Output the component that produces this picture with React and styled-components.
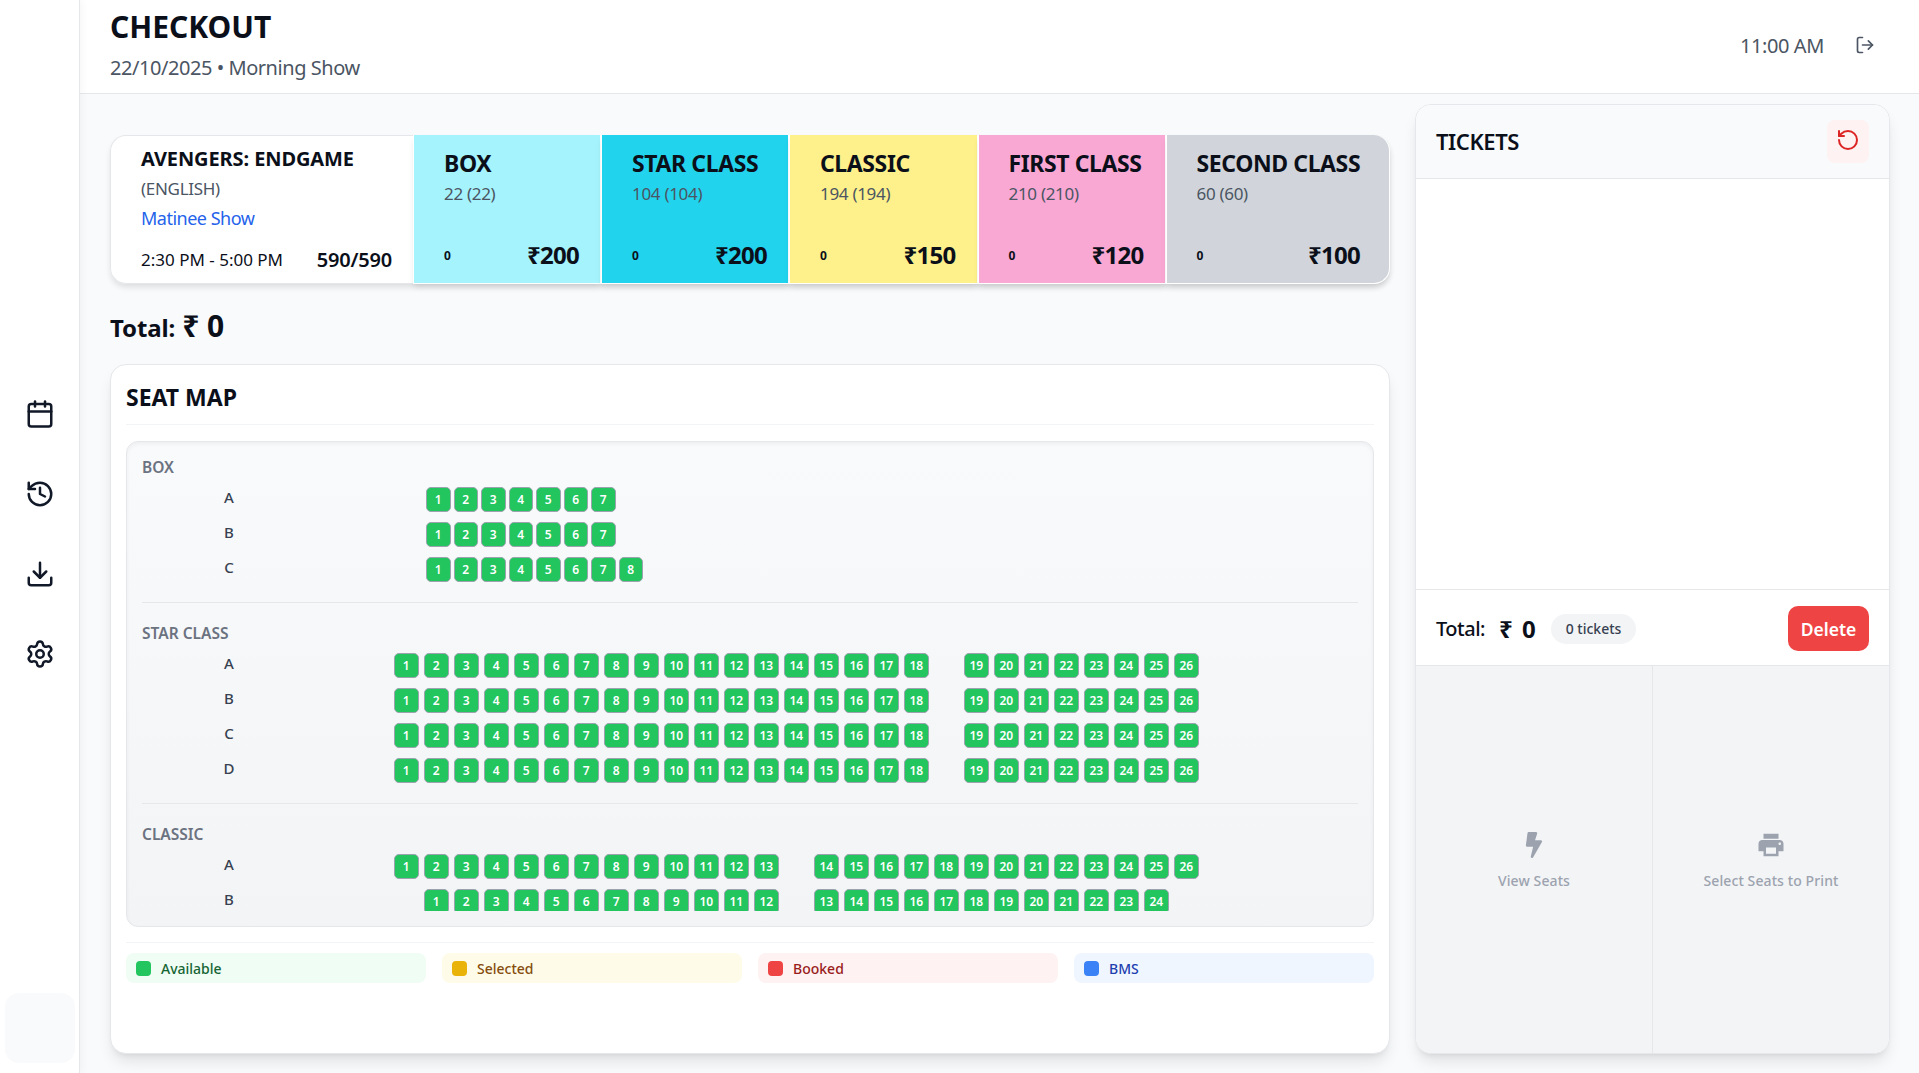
import React from "react";
import styled, { createGlobalStyle } from "styled-components";
import { Calendar, History, Download, Settings, LogOut, RotateCcw } from "lucide-react";
import { FaBolt } from "react-icons/fa";
import { MdPrint } from "react-icons/md";

const GlobalStyle = createGlobalStyle`
  html, body { margin: 0; padding: 0; height: 100%; overflow: hidden; }
  body { font-family: "Noto Sans", "Open Sans", sans-serif; color: #0b0f19; background: #f9fafb; }
  * { box-sizing: border-box; }
`;

const Page = styled.div`
  display: flex;
  height: 100vh;
  overflow: hidden;
`;

const Sidebar = styled.aside`
  width: 80px;
  flex: none;
  position: relative;
  z-index: 1;
  background: #fff;
  border-right: 1px solid #e5e7eb;
  box-shadow: 2px 0 8px rgba(0, 0, 0, 0.04);
  display: flex;
  flex-direction: column;
  align-items: center;
  padding: 374px 0 10px;
`;

const SideItem = styled.div`
  height: 80px;
  display: flex;
  align-items: center;
  justify-content: center;
  color: #111827;
`;

const SideFoot = styled.div`
  margin-top: auto;
  width: 70px;
  height: 70px;
  border-radius: 14px;
  background: #f9fafb;
`;

const Body = styled.div`
  flex: 1;
  min-width: 0;
  display: flex;
  flex-direction: column;
`;

const Header = styled.header`
  height: 94px;
  flex: none;
  background: #fff;
  border-bottom: 1px solid #e5e7eb;
  padding: 8px 30px 12px;
  display: flex;
  justify-content: space-between;
  align-items: center;
`;

const Title = styled.h1`
  margin: 0;
  font-size: 30px;
  line-height: 40px;
  font-weight: 700;
`;

const Subtitle = styled.div`
  margin-top: 7px;
  font-size: 20px;
  line-height: 28px;
  letter-spacing: -0.45px;
  color: #4b5563;
`;

const Clock = styled.div`
  display: flex;
  align-items: center;
  gap: 31px;
  font-size: 20px;
  letter-spacing: -0.4px;
  color: #4b5563;
  padding: 1px 14px 0 0;
`;

const Main = styled.main`
  flex: 1;
  min-height: 0;
  display: flex;
  gap: 25px;
  padding: 10px 29px 19px 30px;
`;

const LeftColumn = styled.div`
  flex: 1;
  min-width: 0;
  display: flex;
  flex-direction: column;
  padding-top: 31px;
`;

const ShowRow = styled.div`
  display: grid;
  grid-template-columns: 303px 188px 188px 188.5px 188px minmax(0, 1fr);
  height: 149px;
  border-radius: 16px;
  box-shadow: 0 4px 6px -1px rgba(0, 0, 0, 0.12);
`;

const MovieCard = styled.div`
  background: #fff;
  border: 1px solid #e5e7eb;
  border-right: none;
  border-radius: 16px 0 0 16px;
  padding: 9px 21px 0 30px;
  display: flex;
  flex-direction: column;
`;

const MovieName = styled.div`
  font-size: 20px;
  line-height: 28px;
  letter-spacing: -0.1px;
  font-weight: 700;
`;

const MovieLang = styled.div`
  font-size: 17px;
  line-height: 31px;
  letter-spacing: -0.3px;
  color: #4b5563;
`;

const MovieShow = styled.div`
  font-size: 18px;
  line-height: 29px;
  letter-spacing: -0.5px;
  color: #2563eb;
`;

const MovieFoot = styled.div`
  margin-top: auto;
  margin-bottom: 9px;
  display: flex;
  justify-content: space-between;
  align-items: center;
  font-size: 17px;
  line-height: 28px;
`;

const SeatCount = styled.span`
  font-size: 20px;
  letter-spacing: -0.2px;
  font-weight: 600;
`;

const ClassCell = styled.div`
  min-width: 0;
  background: ${(p) => p.$bg};
  border: 1px solid #fff;
  border-width: 0 1px 1px 1px;
  padding: 12px 21px 0 30px;
  display: flex;
  flex-direction: column;
  box-shadow: 0 4px 6px -1px rgba(0, 0, 0, 0.1);

  &:last-child {
    border-radius: 0 16px 16px 0;
    padding-right: 29px;
  }
`;

const ClassName = styled.div`
  font-size: 23px;
  line-height: 32px;
  font-weight: 700;
  white-space: nowrap;
  letter-spacing: -0.4px;
`;

const ClassSeats = styled.div`
  margin-top: 1px;
  font-size: 17px;
  line-height: 28px;
  letter-spacing: -0.3px;
  color: #4b5563;
`;

const ClassFoot = styled.div`
  margin-top: auto;
  margin-bottom: 12px;
  display: flex;
  justify-content: space-between;
  align-items: center;
`;

const ClassQty = styled.span`
  font-size: 12px;
  font-weight: 700;
`;

const ClassPrice = styled.span`
  font-size: 24px;
  line-height: 32px;
  letter-spacing: -0.7px;
  font-weight: 700;
`;

const TotalLine = styled.div`
  display: flex;
  align-items: baseline;
  gap: 7px;
  height: 80px;
  padding-top: 21px;
  font-size: 24px;
  font-weight: 700;
  letter-spacing: -0.1px;
`;

const TotalAmount = styled.span`
  font-size: 30px;
`;

const MapCard = styled.section`
  flex: 1;
  min-height: 0;
  background: #fff;
  border: 1px solid #e5e7eb;
  border-radius: 16px;
  box-shadow: 0 10px 15px -3px rgba(0, 0, 0, 0.1), 0 4px 6px -4px rgba(0, 0, 0, 0.1);
  padding: 16px 15px 0;
  display: flex;
  flex-direction: column;
`;

const MapTitle = styled.h2`
  margin: 0 0 16px;
  height: 44px;
  border-bottom: 1px solid #f3f4f6;
  font-size: 23px;
  line-height: 32px;
  font-weight: 700;
`;

const MapPanel = styled.div`
  height: 486px;
  flex: none;
  background: linear-gradient(#f9fafb, #f3f4f6);
  border: 1px solid #e5e7eb;
  border-radius: 12px;
  box-shadow: inset 0 2px 4px rgba(0, 0, 0, 0.05);
  padding: 15px;
`;

const MapScroll = styled.div`
  height: 100%;
  overflow: hidden;
`;

const ClassBlock = styled.div`
  padding-bottom: 20px;
  margin-bottom: 20px;
  border-bottom: 1px solid #e5e7eb;

  &:last-child {
    border-bottom: none;
    margin-bottom: 0;
  }
`;

const ClassHeading = styled.div`
  font-size: 15.5px;
  line-height: 20px;
  font-weight: 600;
  color: #6b7280;
  margin-bottom: 10px;
`;

const SeatRow = styled.div`
  display: grid;
  grid-template-columns: 174px 1fr;
  height: 25px;
  margin-bottom: 10px;

  &:last-child {
    margin-bottom: 0;
  }
`;

const RowLabel = styled.div`
  text-align: center;
  font-size: 15px;
  line-height: 20px;
  font-weight: 500;
  color: #374151;
`;

const Seats = styled.div`
  display: flex;
  gap: ${(p) => p.$gap}px;
  padding-left: ${(p) => p.$indent}px;
`;

const Seat = styled.div`
  width: 24.5px;
  height: 25px;
  flex: none;
  background: #22c55e;
  border: 1px solid #9ca3af;
  border-radius: 5px;
  color: #fff;
  font-size: 12px;
  font-weight: 600;
  display: flex;
  align-items: center;
  justify-content: center;
`;

const Aisle = styled.div`
  width: 24.5px;
  flex: none;
`;

const Legend = styled.div`
  margin-top: 15px;
  border-top: 1px solid #f3f4f6;
  padding-top: 10px;
  display: grid;
  grid-template-columns: repeat(4, 1fr);
  gap: 16px;
`;

const LegendItem = styled.div`
  height: 30px;
  border-radius: 8px;
  background: ${(p) => p.$bg};
  color: ${(p) => p.$fg};
  display: flex;
  align-items: center;
  gap: 10px;
  padding-left: 10px;
  font-size: 14px;
  font-weight: 500;
`;

const LegendDot = styled.span`
  width: 15px;
  height: 15px;
  border-radius: 4px;
  background: ${(p) => p.$color};
`;

const TicketPanel = styled.section`
  width: 475px;
  flex: none;
  background: #fff;
  border: 1px solid #e5e7eb;
  border-radius: 16px;
  box-shadow: 0 10px 15px -3px rgba(0, 0, 0, 0.1), 0 4px 6px -4px rgba(0, 0, 0, 0.1);
  display: flex;
  flex-direction: column;
  overflow: hidden;
`;

const TicketHead = styled.div`
  height: 74px;
  flex: none;
  background: #f9fafb;
  border-bottom: 1px solid #e5e7eb;
  padding: 0 20px;
  display: flex;
  align-items: center;
  justify-content: space-between;
`;

const TicketTitle = styled.div`
  font-size: 22px;
  font-weight: 600;
  letter-spacing: -0.4px;
  padding-bottom: 2px;
`;

const ResetButton = styled.div`
  width: 42px;
  height: 43px;
  border-radius: 8px;
  background: #fef2f2;
  color: #dc2626;
  display: flex;
  align-items: center;
  justify-content: center;
  padding-bottom: 4px;
`;

const TicketList = styled.div`
  flex: 1;
  min-height: 0;
`;

const TicketTotal = styled.div`
  height: 77px;
  flex: none;
  border-top: 1px solid #e5e7eb;
  border-bottom: 1px solid #e5e7eb;
  padding: 2px 20px 0;
  display: flex;
  align-items: center;
`;

const TotalLabel = styled.span`
  font-size: 20px;
  font-weight: 500;
  letter-spacing: -0.5px;
`;

const TotalValue = styled.span`
  margin-left: 14px;
  font-size: 24px;
  font-weight: 700;
  word-spacing: 3px;
`;

const TicketBadge = styled.span`
  margin-left: 15px;
  height: 30px;
  padding: 0 15px;
  border-radius: 15px;
  background: #f3f4f6;
  color: #374151;
  font-size: 14px;
  font-weight: 500;
  display: flex;
  align-items: center;
`;

const DeleteButton = styled.button`
  margin-left: auto;
  width: 81px;
  height: 45px;
  border: none;
  border-radius: 10px;
  background: #ef4444;
  color: #fff;
  font-family: inherit;
  font-size: 17.5px;
  font-weight: 600;
`;

const ActionGrid = styled.div`
  height: 387px;
  flex: none;
  display: grid;
  grid-template-columns: 236px 1fr;
  background: #f3f4f6;
`;

const ActionButton = styled.div`
  display: flex;
  flex-direction: column;
  align-items: center;
  justify-content: center;
  gap: 14px;
  padding-top: 3px;
  color: #9ca3af;
  font-size: 14px;
  letter-spacing: 0.1px;
  font-weight: 500;

  & + & {
    border-left: 1px solid #e5e7eb;
  }
`;

const ActionIcon = styled.span`
  height: 24px;
  display: flex;
  align-items: center;
`;

const classes = [
  { name: "BOX", seats: "22 (22)", price: 200, bg: "#a5f3fc" },
  { name: "STAR CLASS", seats: "104 (104)", price: 200, bg: "#22d3ee" },
  { name: "CLASSIC", seats: "194 (194)", price: 150, bg: "#fef08a" },
  { name: "FIRST CLASS", seats: "210 (210)", price: 120, bg: "#f9a8d4" },
  { name: "SECOND CLASS", seats: "60 (60)", price: 100, bg: "#d1d5db" },
];

// from/to seat numbers, null puts an aisle in the row
const seatMap = [
  {
    name: "BOX",
    gap: 3,
    rows: [
      { label: "A", indent: 110, parts: [[1, 7]] },
      { label: "B", indent: 110, parts: [[1, 7]] },
      { label: "C", indent: 110, parts: [[1, 8]] },
    ],
  },
  {
    name: "STAR CLASS",
    gap: 5.5,
    rows: ["A", "B", "C", "D"].map((label) => ({
      label,
      indent: 78,
      parts: [[1, 18], null, [19, 26]],
    })),
  },
  {
    name: "CLASSIC",
    gap: 5.5,
    rows: [
      { label: "A", indent: 78, parts: [[1, 13], null, [14, 26]] },
      { label: "B", indent: 108, parts: [[1, 12], null, [13, 24]] },
    ],
  },
];

const legend = [
  { label: "Available", color: "#22c55e", bg: "#f0fdf4", fg: "#166534" },
  { label: "Selected", color: "#eab308", bg: "#fefce8", fg: "#854d0e" },
  { label: "Booked", color: "#ef4444", bg: "#fef2f2", fg: "#991b1b" },
  { label: "BMS", color: "#3b82f6", bg: "#eff6ff", fg: "#1e40af" },
];

const renderSeats = (parts) =>
  parts.map((part, i) => {
    if (!part) return <Aisle key={i} />;
    const out = [];
    for (let n = part[0]; n <= part[1]; n++) out.push(<Seat key={n}>{n}</Seat>);
    return out;
  });

const App = () => {
  return (
    <Page>
      <GlobalStyle />
      <Sidebar>
        <SideItem><Calendar size={30} /></SideItem>
        <SideItem><History size={30} /></SideItem>
        <SideItem><Download size={30} /></SideItem>
        <SideItem><Settings size={30} /></SideItem>
        <SideFoot />
      </Sidebar>
      <Body>
        <Header>
          <div>
            <Title>CHECKOUT</Title>
            <Subtitle>22/10/2025 • Morning Show</Subtitle>
          </div>
          <Clock>
            <span>11:00 AM</span>
            <LogOut size={20} />
          </Clock>
        </Header>
        <Main>
          <LeftColumn>
            <ShowRow>
              <MovieCard>
                <MovieName>AVENGERS: ENDGAME</MovieName>
                <MovieLang>(ENGLISH)</MovieLang>
                <MovieShow>Matinee Show</MovieShow>
                <MovieFoot>
                  <span>2:30 PM - 5:00 PM</span>
                  <SeatCount>590/590</SeatCount>
                </MovieFoot>
              </MovieCard>
              {classes.map((c) => (
                <ClassCell key={c.name} $bg={c.bg}>
                  <ClassName>{c.name}</ClassName>
                  <ClassSeats>{c.seats}</ClassSeats>
                  <ClassFoot>
                    <ClassQty>0</ClassQty>
                    <ClassPrice>₹{c.price}</ClassPrice>
                  </ClassFoot>
                </ClassCell>
              ))}
            </ShowRow>
            <TotalLine>
              Total: <TotalAmount>₹ 0</TotalAmount>
            </TotalLine>
            <MapCard>
              <MapTitle>SEAT MAP</MapTitle>
              <MapPanel>
                <MapScroll>
                  {seatMap.map((block) => (
                    <ClassBlock key={block.name}>
                      <ClassHeading>{block.name}</ClassHeading>
                      {block.rows.map((row) => (
                        <SeatRow key={row.label}>
                          <RowLabel>{row.label}</RowLabel>
                          <Seats $gap={block.gap} $indent={row.indent}>
                            {renderSeats(row.parts)}
                          </Seats>
                        </SeatRow>
                      ))}
                    </ClassBlock>
                  ))}
                </MapScroll>
              </MapPanel>
              <Legend>
                {legend.map((l) => (
                  <LegendItem key={l.label} $bg={l.bg} $fg={l.fg}>
                    <LegendDot $color={l.color} />
                    {l.label}
                  </LegendItem>
                ))}
              </Legend>
            </MapCard>
          </LeftColumn>
          <TicketPanel>
            <TicketHead>
              <TicketTitle>TICKETS</TicketTitle>
              <ResetButton><RotateCcw size={24} /></ResetButton>
            </TicketHead>
            <TicketList />
            <TicketTotal>
              <TotalLabel>Total:</TotalLabel>
              <TotalValue>₹ 0</TotalValue>
              <TicketBadge>0 tickets</TicketBadge>
              <DeleteButton>Delete</DeleteButton>
            </TicketTotal>
            <ActionGrid>
              <ActionButton>
                <ActionIcon><FaBolt size={26} /></ActionIcon>
                View Seats
              </ActionButton>
              <ActionButton>
                <ActionIcon><MdPrint size={30} /></ActionIcon>
                Select Seats to Print
              </ActionButton>
            </ActionGrid>
          </TicketPanel>
        </Main>
      </Body>
    </Page>
  );
};

export default App;
